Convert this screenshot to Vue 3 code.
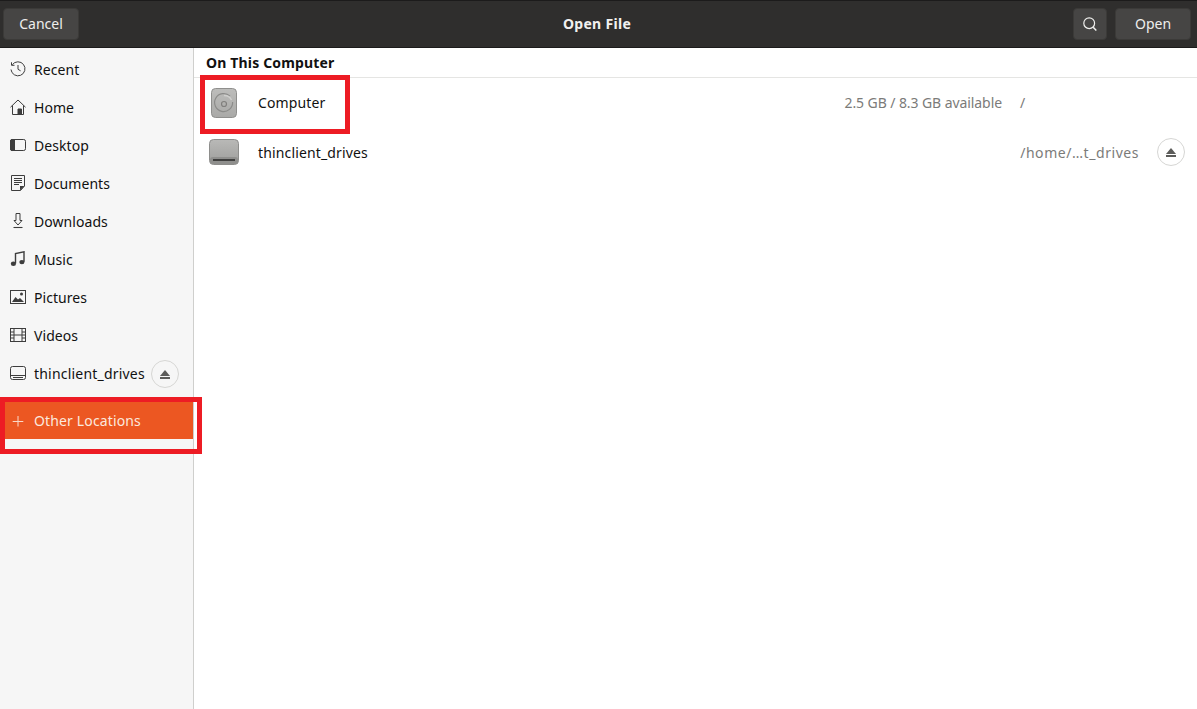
<script setup>
const places = [
  { name: 'Recent', icon: 'recent' },
  { name: 'Home', icon: 'home' },
  { name: 'Desktop', icon: 'desktop' },
  { name: 'Documents', icon: 'documents' },
  { name: 'Downloads', icon: 'downloads' },
  { name: 'Music', icon: 'music' },
  { name: 'Pictures', icon: 'pictures' },
  { name: 'Videos', icon: 'videos' },
]
</script>

<template>
  <div class="window">
    <header class="headerbar">
      <button class="btn cancel"><span class="lbl">Cancel</span></button>
      <div class="title">Open File</div>
      <div class="header-right">
        <button class="btn search" aria-label="Search">
          <svg width="16" height="16" viewBox="0 0 16 16" fill="none" stroke="#f0f0ee" stroke-width="1.2">
            <circle cx="7.2" cy="7.2" r="5.4" />
            <path d="M11.2 11.2 14.3 14.5" stroke-width="1.5" />
          </svg>
        </button>
        <button class="btn open"><span class="lbl">Open</span></button>
      </div>
    </header>
    <div class="body">
      <aside class="sidebar">
        <div v-for="p in places" :key="p.name" class="place">
          <svg class="icon" width="16" height="16" viewBox="0 0 16 16" fill="none" stroke="#3d3d3d" stroke-width="1">
            <template v-if="p.icon === 'recent'">
              <path d="M2.300 3.700A7 7 0 1 1 1 8.500" />
              <path d="M1.500 1.300v3h3" />
              <path d="M8 4v4.300l2.600 1.500" />
            </template>
            <template v-else-if="p.icon === 'home'">
              <path d="M.5 8.200 8 1l7.500 7.200" />
              <path d="M2.500 6.500v9h11v-9" />
              <path d="M8 10h3.500v5.500H8z" fill="#3d3d3d" />
            </template>
            <template v-else-if="p.icon === 'desktop'">
              <rect x=".5" y="2.500" width="15" height="11" rx="1.800" />
              <path d="M2 2.500h2.500v11H2a1.500 1.500 0 0 1-1.500-1.500V4A1.500 1.500 0 0 1 2 2.500z" fill="#3d3d3d" />
            </template>
            <template v-else-if="p.icon === 'documents'">
              <path d="M1.500.5h13v10.500l-4 4.500h-9z" />
              <path d="M4 3.500h8M4 5.500h8M4 7.500h8M4 9.500h5" />
              <path d="M10 15.500V11h4.500z" fill="#3d3d3d" stroke="none" />
            </template>
            <template v-else-if="p.icon === 'downloads'">
              <path d="M6 .5v7H4l4 4.500 4-4.500h-2v-7z" />
              <path d="M3.500 14.500h9" stroke-width="1.100" />
            </template>
            <template v-else-if="p.icon === 'music'">
              <path d="M5.500 12.500V2.500l8.500-1.700v10" stroke-width="1.400" />
              <ellipse cx="3.400" cy="12.800" rx="2.600" ry="2.200" fill="#3d3d3d" stroke="none" />
              <ellipse cx="11.900" cy="11.100" rx="2.600" ry="2.200" fill="#3d3d3d" stroke="none" />
            </template>
            <template v-else-if="p.icon === 'pictures'">
              <rect x=".5" y="1.500" width="15" height="13" />
              <path d="M2 13l3.500-5 2.500 2.500 2-1.500 4 4z" fill="#3d3d3d" stroke="none" />
              <circle cx="11.500" cy="5" r="1.500" fill="#3d3d3d" stroke="none" />
            </template>
            <template v-else-if="p.icon === 'videos'">
              <rect x=".5" y="1.500" width="15" height="13" />
              <path d="M4 1.500v13M12 1.500v13M.5 5h3.500M.5 8h3.500M.5 11h3.500M12 5h3.500M12 8h3.500M12 11h3.500M4 8h8" />
            </template>
          </svg>
          <span>{{ p.name }}</span>
        </div>
        <div class="place">
          <svg class="icon" width="16" height="16" viewBox="0 0 16 16" fill="none" stroke="#3d3d3d" stroke-width="1">
            <rect x=".5" y="1.500" width="15" height="13" rx="2" />
            <path d="M.5 10.500h15M3 12.500h10" />
          </svg>
          <span class="wide">thinclient_drives</span>
          <button class="eject side-eject" aria-label="Eject"><i class="eject-tri"></i><i class="eject-bar"></i></button>
        </div>
        <div class="place active">
          <svg class="icon" width="16" height="16" viewBox="0 0 16 16" fill="none" stroke="#f9d9c9" stroke-width="1">
            <path d="M8 3v10.500M2.700 8.500h10.600" />
          </svg>
          <span class="wide-2">Other Locations</span>
        </div>
      </aside>
      <main class="content">
        <div class="section-title">On This Computer</div>
        <div class="row computer">
          <div class="drive-cell">
            <svg width="28" height="30" viewBox="0 0 28 30">
              <defs>
                <linearGradient id="gc" x1="0" y1="0" x2="0" y2="1">
                  <stop offset="0" stop-color="#bdbdbb" />
                  <stop offset="1" stop-color="#a9a9a7" />
                </linearGradient>
              </defs>
              <rect x="1.500" y=".5" width="25" height="29" rx="4" fill="url(#gc)" stroke="#8f8f8d" />
              <path d="M20 8.200A9 9 0 1 0 22.600 14" fill="none" stroke="#8b8b89" stroke-width="1.200" />
              <path d="M14 7.500A8 8 0 0 1 21.500 12" fill="none" stroke="#cfcfcd" stroke-width="1.500" />
              <circle cx="14" cy="16" r="2.500" fill="none" stroke="#807f7d" stroke-width="1.200" />
            </svg>
          </div>
          <span class="name">Computer</span>
          <span class="space">2.5 GB / 8.3 GB available</span>
          <span class="path">/</span>
        </div>
        <div class="row">
          <div class="drive-cell">
            <svg width="30" height="26" viewBox="0 0 30 26">
              <defs>
                <linearGradient id="gd" x1="0" y1="0" x2="0" y2="1">
                  <stop offset="0" stop-color="#b9b9b7" />
                  <stop offset="1" stop-color="#9e9e9c" />
                </linearGradient>
              </defs>
              <rect x=".5" y=".5" width="29" height="25" rx="4" fill="url(#gd)" stroke="#8e8e8c" />
              <rect x="1" y="18" width="28" height="7" rx="3" fill="#8f8f8d" />
              <rect x="4" y="20" width="22" height="2" fill="#3f3f3e" />
            </svg>
          </div>
          <span class="name">thinclient_drives</span>
          <span class="path long">/home/…t_drives</span>
          <button class="eject row-eject" aria-label="Eject"><i class="eject-tri"></i><i class="eject-bar"></i></button>
        </div>
      </main>
    </div>
    <div class="mark mark-side"></div>
    <div class="mark mark-computer"></div>
  </div>
</template>

<style>
html, body { margin: 0; background: #fff; }
</style>

<style scoped>
.window {
  position: relative;
  width: 1197px;
  height: 709px;
  overflow: hidden;
  display: flex;
  flex-direction: column;
  font-family: "Noto Sans", sans-serif;
  font-size: 14px;
  color: #111;
  background: #fff;
}
.headerbar {
  height: 46px;
  flex: none;
  padding: 0 2px 0 3px;
  display: flex;
  align-items: center;
  justify-content: space-between;
  background: #2f2e2d;
  border-top: 1px solid #1c1b1b;
  border-bottom: 1px solid #1c1b1b;
  position: relative;
}
.title {
  position: absolute;
  left: 0;
  right: 3px;
  padding-bottom: 2px;
  text-align: center;
  color: #f2f1ef;
  font-weight: 700;
  font-size: 14px;
  letter-spacing: .3px;
  pointer-events: none;
}
.btn {
  height: 32px;
  border: 1px solid #3b3a38;
  border-radius: 4px;
  background: #464544;
  color: #eeeeec;
  font: inherit;
  padding: 0;
  display: flex;
  align-items: center;
  justify-content: center;
}
.lbl { margin-bottom: 2px; }
.cancel { width: 76px; }
.search { width: 34px; }
.open { width: 76px; }
.header-right { display: flex; gap: 8px; margin-right: 3px; transform: translateX(-1px); }
.body { flex: 1; display: flex; min-height: 0; }
.sidebar {
  width: 193px;
  flex: none;
  background: #f6f6f6;
  border-right: 1px solid #cfcfcd;
  padding-top: 2px;
}
.place {
  height: 38px;
  display: flex;
  align-items: center;
  padding-left: 10px;
  color: #111;
  letter-spacing: .06px;
}
.wide { letter-spacing: .2px; }
.wide-2 { letter-spacing: .14px; }
.icon { flex: none; margin-right: 8px; }
.place.active {
  margin-top: 10px;
  margin-left: 5px;
  padding-left: 5px;
  height: 37px;
  background: #ec5722;
  color: #fbe8dd;
}
.eject {
  padding: 0;
  background: #f6f6f6;
  border: 1px solid #d6d6d4;
  border-radius: 50%;
  width: 28px;
  height: 28px;
  display: flex;
  flex-direction: column;
  align-items: center;
  justify-content: center;
  gap: 1px;
  flex: none;
}
.eject-tri {
  width: 0;
  height: 0;
  border-left: 5px solid transparent;
  border-right: 5px solid transparent;
  border-bottom: 6px solid #5c5c5a;
}
.eject-bar { width: 10px; height: 2px; background: #5c5c5a; }
.side-eject { margin-left: 6px; margin-top: 2px; }
.content { flex: 1; min-width: 0; }
.section-title {
  height: 30px;
  box-sizing: border-box;
  padding-top: 5px;
  padding-left: 12px;
  font-weight: 700;
  font-size: 14px;
  letter-spacing: .16px;
  color: #111;
  border-bottom: 1px solid #e5e5e3;
}
.row {
  height: 50px;
  display: flex;
  align-items: center;
  padding-right: 12px;
}
.computer { height: 49px; }
.drive-cell {
  width: 60px;
  margin-right: 4px;
  flex: none;
  display: flex;
  justify-content: center;
}
.name { flex: 1; letter-spacing: .14px; }
.space { color: #7b7b79; margin-right: 18px; letter-spacing: -.08px; }
.path { color: #7b7b79; width: 165px; }
.path.long { width: auto; margin-right: 18px; letter-spacing: .55px; }
.row-eject { background: #fff; }
.mark { position: absolute; border: 5px solid #ed1c24; box-sizing: border-box; pointer-events: none; }
.mark-side { left: 0; top: 397px; width: 202px; height: 57px; }
.mark-computer { left: 200px; top: 75px; width: 150px; height: 59px; }
</style>
